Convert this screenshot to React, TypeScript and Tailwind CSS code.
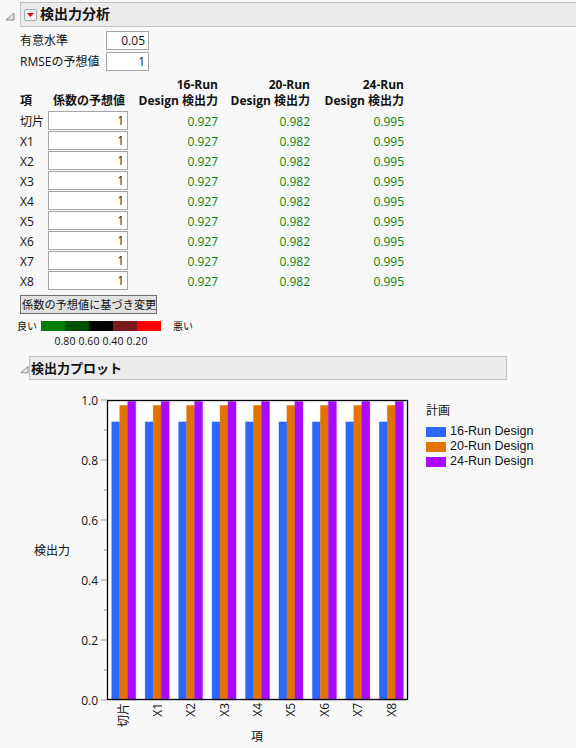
import React from "react";

const rows = ["切片", "X1", "X2", "X3", "X4", "X5", "X6", "X7", "X8"];
const vals = [0.927, 0.982, 0.995];
const colors = ["#2a68ff", "#e27300", "#aa08ff"];

function Tri() {
  return (
    <svg width="10" height="9" viewBox="0 0 10 9">
      <polygon points="9,1 9,8 1,8" fill="#e4e4e4" stroke="#8a8a8a" strokeWidth="1" />
    </svg>
  );
}

function Chart() {
  const L = 107, R = 408, T = 14, B = 314;
  const gw = (R - L) / 9;
  const ticks = [1, 0.8, 0.6, 0.4, 0.2, 0];
  const minors = [0.9, 0.7, 0.5, 0.3, 0.1];
  const y = (v: number) => T + (1 - v) * 300;
  return (
    <svg width="420" height="360" viewBox="0 0 420 360" className="shrink-0">
      <rect x={L} y={T} width={R - L} height={B - T} fill="#ffffff" />
      {rows.map((r, i) => {
        const cx = L + gw * (i + 0.5);
        return (
          <g key={r}>
            {vals.map((v, j) => (
              <rect
                key={j}
                x={cx - 12 + j * 8}
                y={y(v)}
                width={8}
                height={B - y(v)}
                fill={colors[j]}
                stroke={colors[j]}
                strokeOpacity={0.45}
                strokeWidth={0.8}
              />
            ))}
            <text
              x={0}
              y={0}
              transform={`translate(${cx},${B + 3}) rotate(-90)`}
              textAnchor="end"
              dominantBaseline="central"
              fontSize="12"
              fill="#111"
            >
              {r}
            </text>
          </g>
        );
      })}
      <rect x={L + 0.5} y={T + 0.5} width={R - L - 1} height={B - T - 1} fill="none" stroke="#000" strokeWidth="1.3" />
      {ticks.map((t) => (
        <g key={t}>
          <line x1={101} x2={107} y1={y(t)} y2={y(t)} stroke="#999" strokeWidth="1" />
          <text x={98} y={y(t)} textAnchor="end" dominantBaseline="central" fontSize="12" fill="#111">
            {t.toFixed(1)}
          </text>
        </g>
      ))}
      {minors.map((t) => (
        <line key={t} x1={104} x2={107} y1={y(t)} y2={y(t)} stroke="#999" strokeWidth="1" />
      ))}
      <text x={52} y={164} textAnchor="middle" dominantBaseline="central" fontSize="12" fill="#111">
        検出力
      </text>
      <text x={257} y={350} textAnchor="middle" dominantBaseline="central" fontSize="12" fill="#111">
        項
      </text>
    </svg>
  );
}

export default function App() {
  return (
    <div className="w-[576px] h-[748px] bg-[#f8f8f8] overflow-hidden text-[12px] text-[#111] font-['Open_Sans','Noto_Sans_CJK_JP',sans-serif] leading-none">
      {/* Header */}
      <div className="flex items-center pt-[2px]">
        <div className="w-[20px] flex justify-center pt-[3px]">
          <Tri />
        </div>
        <div className="flex-1 h-[25px] bg-[#ebebeb] border-y border-l border-[#c2c2c2] flex items-center pl-[3px] gap-[3px]">
          <div className="w-[13px] h-[12px] border border-[#a8a8a8] bg-[#f4f4f4] rounded-[2px] flex items-center justify-center">
            <svg width="7" height="4" viewBox="0 0 7 4">
              <polygon points="0,0 7,0 3.5,4" fill="#e00000" />
            </svg>
          </div>
          <span className="text-[14px] font-bold font-['Noto_Sans_CJK_JP',sans-serif] mb-[3px]">検出力分析</span>
        </div>
      </div>

      <div className="pl-[20px] pt-[3px]">
        {/* top inputs */}
        <div className="flex items-center h-[21px]">
          <span className="w-[86px]">有意水準</span>
          <div className="w-[43px] h-[19px] border border-[#a5a5a5] bg-white flex items-center justify-end pr-[3px]">0.05</div>
        </div>
        <div className="flex items-center h-[21px]">
          <span className="w-[86px]">RMSEの予想値</span>
          <div className="w-[43px] h-[19px] border border-[#a5a5a5] bg-white flex items-center justify-end pr-[3px]">1</div>
        </div>

        {/* table header */}
        <div className="flex items-end h-[19px] font-bold">
          <span className="w-[108px]" />
          <span className="w-[90px] text-right">16-Run</span>
          <span className="w-[92px] text-right">20-Run</span>
          <span className="w-[94px] text-right">24-Run</span>
        </div>
        <div className="flex items-center h-[20px] font-bold">
          <span className="w-[28px]">項</span>
          <span className="w-[80px] text-center pl-[2px]">係数の予想値</span>
          <span className="w-[90px] text-right">Design 検出力</span>
          <span className="w-[92px] text-right">Design 検出力</span>
          <span className="w-[94px] text-right">Design 検出力</span>
        </div>

        {/* data rows */}
        {rows.map((r) => (
          <div key={r} className="flex items-start h-[20px]">
            <span className="w-[28px] h-[19px] flex items-center pt-[2px]">{r}</span>
            <div className="w-[80px] h-[19px] border border-[#a5a5a5] bg-white flex items-center justify-end pr-[3px] pt-[1px]">1</div>
            {vals.map((v, j) => (
              <span
                key={j}
                className={`h-[19px] flex items-center justify-end pt-[2px] text-[#0c820c] ${j === 0 ? "w-[90px]" : j === 1 ? "w-[92px]" : "w-[94px]"}`}
              >
                {v.toFixed(3)}
              </span>
            ))}
          </div>
        ))}

        {/* button */}
        <div className="mt-[4px] w-[137px] h-[19px] border border-[#707070] bg-[#e1e1e1] flex items-center pl-[1px] text-[11.2px] whitespace-nowrap font-['Noto_Sans_CJK_JP',sans-serif]">
          係数の予想値に基づき変更
        </div>

        {/* color legend */}
        <div className="mt-[7px] flex items-center h-[10px] ml-[-3px]">
          <span className="w-[24px] text-[10px] font-['Noto_Sans_CJK_JP',sans-serif]">良い</span>
          <div className="flex h-[10px]">
            <div className="w-[24px] bg-[#007f00]" />
            <div className="w-[24px] bg-[#005000]" />
            <div className="w-[24px] bg-[#000000]" />
            <div className="w-[24px] bg-[#7f1818]" />
            <div className="w-[24px] bg-[#ff0000]" />
          </div>
          <span className="ml-[12px] text-[10px] font-['Noto_Sans_CJK_JP',sans-serif]">悪い</span>
        </div>
        <div className="flex h-[14px] mt-[3px] items-center text-[10.5px] ml-[33px]">
          <span className="w-[24px] text-center">0.80</span>
          <span className="w-[24px] text-center">0.60</span>
          <span className="w-[24px] text-center">0.40</span>
          <span className="w-[24px] text-center">0.20</span>
        </div>
      </div>

      {/* plot header */}
      <div className="flex items-center mt-[8px] pl-[20px]">
        <div className="w-[9px] flex justify-start pt-[3px]">
          <Tri />
        </div>
        <div className="w-[478px] h-[24px] bg-[#ebebeb] border border-[#c2c2c2] flex items-center pl-[1px]">
          <span className="text-[13px] font-bold font-['Noto_Sans_CJK_JP',sans-serif] mb-[2px]">検出力プロット</span>
        </div>
      </div>

      {/* chart */}
      <div className="flex mt-[6px]">
        <Chart />
        <div className="ml-[6px] pt-[16px] leading-[15px]">
          <div className="h-[16px] flex items-center">計画</div>
          <div className="mt-[6px] font-['Liberation_Sans',sans-serif] text-[12.5px]">
            {["16-Run Design", "20-Run Design", "24-Run Design"].map((n, j) => (
              <div key={n} className="h-[15px] flex items-center gap-[4px]">
                <div
                  className={`w-[20px] h-[10px] ${j === 0 ? "bg-[#2a68ff]" : j === 1 ? "bg-[#e27300]" : "bg-[#aa08ff]"}`}
                />
                <span>{n}</span>
              </div>
            ))}
          </div>
        </div>
      </div>
    </div>
  );
}
